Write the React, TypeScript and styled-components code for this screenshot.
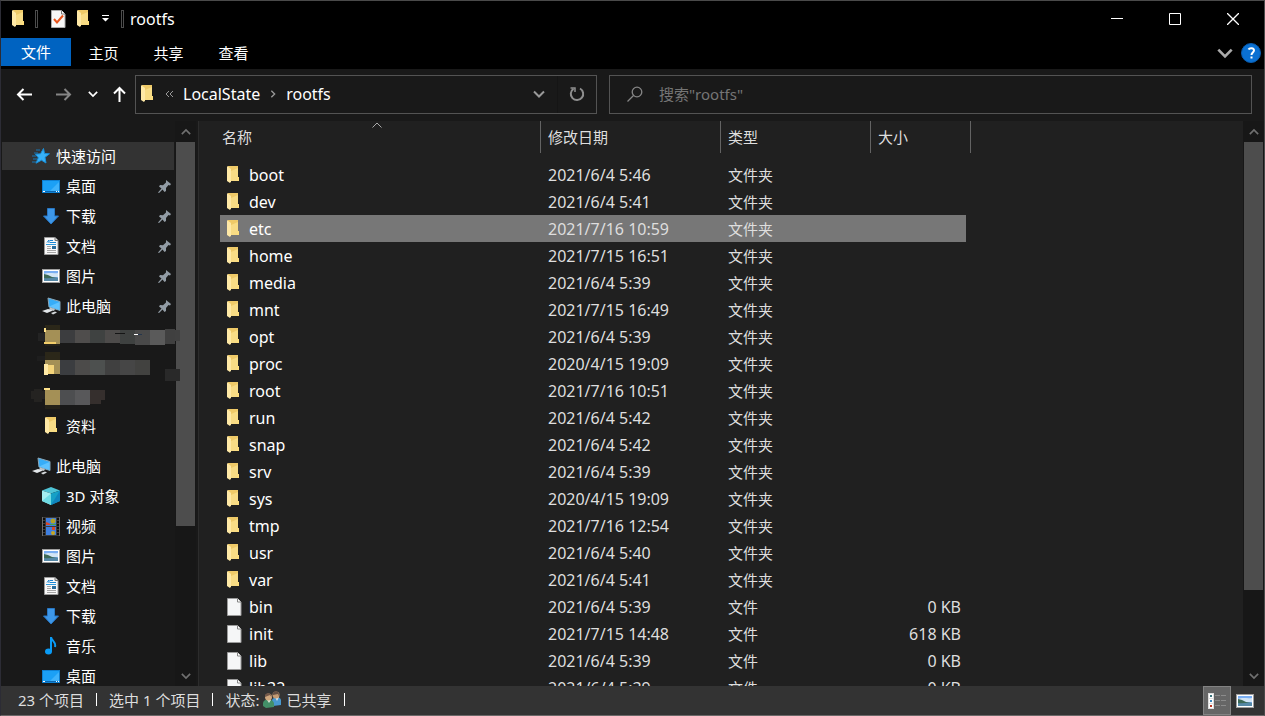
import React from "react";
import styled, { createGlobalStyle, css } from "styled-components";

const GlobalStyle = createGlobalStyle`
  *, *::before, *::after { box-sizing: border-box; }
  html, body { margin: 0; padding: 0; background: #000; }
  body, button, input, table {
    font-family: "Noto Sans", "Noto Sans CJK SC", sans-serif;
    font-size: 15px;
    line-height: 20px;
    color: #fff;
  }
  button { margin: 0; padding: 0; border: 0; background: none; cursor: default; }
  svg { display: block; flex: none; }
`;

const Window = styled.div`
  height: 100vh;
  min-height: 400px;
  display: flex;
  flex-direction: column;
  overflow: hidden;
  background: #191919;
  border: 1px solid #4a4a4a;
  border-left-color: #2c2c35;
  border-bottom-color: #6b6868;
`;

/* ---------- title bar ---------- */
const TitleBar = styled.header`
  flex: none;
  height: 37px;
  display: flex;
  align-items: center;
  padding: 0 0 2px 11px;
  background: #000;
`;

const QuickButton = styled.button<{ $gap: number }>`
  display: flex;
  margin-left: ${(p) => p.$gap}px;
`;

const Tick = styled.span<{ $gap: number }>`
  width: 3px;
  height: 18px;
  margin-left: ${(p) => p.$gap}px;
  border: 1px solid #4d4d4d;
`;

const Title = styled.h1`
  flex: 1;
  margin: 0 0 0 6px;
  font-size: 16px;
  font-weight: 400;
  line-height: 20px;
`;

const CaptionButtons = styled.div`
  display: flex;
  align-self: stretch;
  padding-right: 2px;
`;

const CaptionButton = styled.button`
  width: 58px;
  display: flex;
  align-items: center;
  justify-content: center;
`;

/* ---------- ribbon ---------- */
const Ribbon = styled.nav`
  flex: none;
  height: 31px;
  display: flex;
  align-items: flex-start;
  background: #000;
`;

const RibbonTab = styled.button<{ $primary?: boolean }>`
  width: ${(p) => (p.$primary ? 70 : 65)}px;
  height: ${(p) => (p.$primary ? 28 : 30)}px;
  background: ${(p) => (p.$primary ? "#0063c1" : "transparent")};
`;

const RibbonEnd = styled.div`
  margin-left: auto;
  height: 30px;
  display: flex;
  align-items: center;
  gap: 8px;
  padding-right: 3px;
`;

const IconButton = styled.button`
  display: flex;
`;

/* ---------- address row ---------- */
const AddressRow = styled.div`
  flex: none;
  height: 52px;
  display: flex;
  align-items: center;
  padding: 0 12px 2px 15px;
`;

const NavButtons = styled.div`
  flex: none;
  width: 119px;
  display: grid;
  grid-template-columns: 39px 33px 23px 17px;
  align-items: center;
`;

const AddressBox = styled.div`
  flex: 455 1 0;
  height: 39px;
  min-width: 0;
  display: flex;
  align-items: center;
  padding-left: 5px;
  border: 1px solid #535353;
`;

const Crumb = styled.button`
  font-size: 16px;
  margin-left: 9px;
`;

const CrumbMark = styled.span`
  display: flex;
  margin-left: 9px;
`;

const HistoryButton = styled.button`
  display: flex;
  justify-content: center;
  width: 36px;
  margin-left: auto;
`;

const RefreshButton = styled.button`
  display: flex;
  align-items: center;
  justify-content: center;
  width: 39px;
  align-self: stretch;
  border-left: 1px solid #151515;
`;

const SearchBox = styled.label`
  flex: 624 1 0;
  height: 39px;
  min-width: 0;
  display: flex;
  align-items: center;
  gap: 16px;
  margin-left: 12px;
  padding-left: 17px;
  border: 1px solid #535353;
`;

const SearchInput = styled.input`
  flex: 1;
  min-width: 0;
  padding: 0;
  border: 0;
  outline: 0;
  background: none;
  &::placeholder { color: #757575; opacity: 1; }
`;

/* ---------- main area ---------- */
const Main = styled.div`
  flex: 1;
  min-height: 0;
  display: flex;
`;

const NavPane = styled.aside`
  flex: none;
  width: 198px;
  display: flex;
  overflow: hidden;
  padding-right: 3px;
  border-right: 1px solid #2c2c2c;
`;

const Tree = styled.nav`
  width: 174px;
  flex: none;
  display: flex;
  flex-direction: column;
  gap: 12px;
  padding: 21px 1px 0;
`;

const TreeGroup = styled.div`
  display: flex;
  flex-direction: column;
  gap: 2px;
`;

const TreeItem = styled.a<{ $root?: boolean; $active?: boolean }>`
  flex: none;
  height: 28px;
  display: flex;
  align-items: center;
  gap: 5px;
  padding: 0 2px 0 ${(p) => (p.$root ? 29 : 39)}px;
  color: #fff;
  text-decoration: none;
  background: ${(p) => (p.$active ? "#333" : "transparent")};
`;

const TreeLabel = styled.span`
  flex: 1;
  white-space: nowrap;
`;

const IconSlot = styled.span`
  width: 20px;
  display: flex;
  justify-content: center;
`;

const Masked = styled.div`
  position: relative;
  flex: none;
  height: 88px;
`;

const MaskArt = styled.svg`
  position: absolute;
  z-index: 1;
  left: 28px;
  top: 0;
`;

const ScrollTrack = styled.div`
  flex: none;
  width: 21px;
  display: flex;
  flex-direction: column;
  padding: 0 1px;
  background: #171717;
`;

const ScrollArrow = styled.button`
  flex: none;
  height: 21px;
  display: flex;
  align-items: center;
  justify-content: center;
`;

const ScrollThumb = styled.div<{ $share: number }>`
  flex: ${(p) => p.$share} 1 0;
  background: #4d4d4d;
`;

const ScrollRest = styled.div<{ $share: number }>`
  flex: ${(p) => p.$share} 1 0;
`;

const FilePane = styled.section`
  flex: 1;
  min-width: 0;
  overflow: hidden;
  padding-left: 21px;
  background: #202020;
`;

/* ---------- file table ---------- */
const FileTable = styled.table`
  table-layout: fixed;
  width: 751px;
  border-collapse: separate;
  border-spacing: 0;
`;

const HeadCell = styled.th`
  height: 40px;
  padding: 0;
  vertical-align: top;
  font-weight: 400;
  text-align: left;
  color: #dedede;
`;

const HeadInner = styled.div<{ $pad: number }>`
  position: relative;
  height: 32px;
  padding: 6px 0 6px ${(p) => p.$pad}px;
  border-right: 1px solid #636363;
`;

const SortMark = styled.svg`
  position: absolute;
  left: 152px;
  top: 1px;
`;

const cellBase = css<{ $selected?: boolean }>`
  height: 27px;
  padding: 0 0 0 7px;
  text-align: left;
  font-weight: 400;
  color: #dedede;
  background: ${(p) => (p.$selected ? "#777" : "transparent")};
`;

const Cell = styled.td<{ $selected?: boolean }>`
  ${cellBase}
`;

const DateCell = styled.td<{ $selected?: boolean }>`
  ${cellBase}
  font-size: 16px;
`;

const SizeCell = styled.td<{ $selected?: boolean }>`
  ${cellBase}
  font-size: 16px;
  text-align: right;
  padding-right: 5px;
  border-right: 5px solid transparent;
  background-clip: padding-box;
`;

const NameCell = styled.th<{ $selected?: boolean }>`
  ${cellBase}
  font-size: 16px;
  color: #fff;
`;

const NameInner = styled.div`
  display: grid;
  grid-template-columns: 15px 1fr;
  column-gap: 7px;
  align-items: center;
`;

/* ---------- status bar ---------- */
const StatusBar = styled.footer`
  flex: none;
  height: 29px;
  display: flex;
  padding-left: 17px;
  background: #333;
  color: #dedede;
`;

const StatusInfo = styled.div`
  display: flex;
  align-items: center;
  gap: 12px;
  padding-bottom: 2px;
`;

const StatusRule = styled.span`
  width: 1px;
  height: 13px;
  background: #fff;
`;

const ShareState = styled.span`
  display: flex;
  align-items: center;
  gap: 4px;
`;

const ViewButtons = styled.div`
  margin-left: auto;
  display: flex;
  padding-right: 5px;
`;

const ViewButton = styled.button<{ $on?: boolean }>`
  width: 28px;
  display: flex;
  align-items: center;
  justify-content: center;
  border: 1px solid ${(p) => (p.$on ? "#838383" : "transparent")};
  background: ${(p) => (p.$on ? "#666" : "transparent")};
`;

/* ---------- icons ---------- */
const FolderIcon = () => (
  <svg width="13" height="18" viewBox="0 0 13 18">
    <path d="M1 0h10v11h1v4H4L1 14z" fill="#efca68" />
    <path d="M4 5l7-3v9h1v4H4z" fill="#f8dc85" />
    <path d="M0 0l4 3v12.500L3 17 0 15z" fill="#ffe9a6" />
    <path d="M11 11h1v4h-2z" fill="#ffdf7c" />
  </svg>
);

const FileIcon = () => (
  <svg width="15" height="18" viewBox="0 0 15 18">
    <path d="M.5.500h10l3.500 3.500v13.500H.5z" fill="#f5f6f7" stroke="#9b9b9b" />
    <path d="M10.500.500v3.500H14" fill="#fff" stroke="#858585" />
  </svg>
);

const CheckDocIcon = () => (
  <svg width="15" height="18" viewBox="0 0 15 18">
    <path d="M.5.500h10l3.500 3.500v13.500H.5z" fill="#f7f7f7" stroke="#aaa" />
    <path d="M10.500.500v3.500H14" fill="#fff" stroke="#777" />
    <path d="M3 9l3 3.500L12 5.500" fill="none" stroke="#e8541c" strokeWidth="2" />
  </svg>
);

const StarIcon = () => (
  <svg width="18" height="16" viewBox="0 0 18 16">
    <path d="M11.500.500l1 5 5 .300-4.500 3.500 1 5.700-4.500-2.800-5.500 3 2.300-5.400L3.500 6.200l5-.4z" fill="#37b1f7" stroke="#198fda" />
    <path d="M4 2h4M2 5h4M0 8h4M1 11h4M0 14h4" stroke="#1877b5" />
  </svg>
);

const DesktopIcon = () => (
  <svg width="18" height="13" viewBox="0 0 18 13">
    <rect x=".5" y=".5" width="17" height="12" fill="#1ba0f6" stroke="#0e80d3" />
    <path d="M8 11L17 2v9z" fill="#3fb2fb" />
    <path d="M1 11.500h16" stroke="#0a65ad" />
    <path d="M1 11.500h2M14 11.500h1M16 11.500h1" stroke="#fff" />
  </svg>
);

const DownloadIcon = () => (
  <svg width="18" height="17" viewBox="0 0 18 17">
    <path d="M5.500.500h7v7.500h4L9 16 1.500 8h4z" fill="#3d97e8" stroke="#2877c4" />
  </svg>
);

const DocumentIcon = () => (
  <svg width="15" height="18" viewBox="0 0 15 18">
    <path d="M.5.500h10.500l3 3v14H.5z" fill="#f8f8f8" stroke="#9a9a9a" />
    <path d="M11 .500v3h3" fill="#ddd" stroke="#777" />
    <path d="M3 5.500l2-2.500v3M6 3.500h3M6 5.500h6" fill="none" stroke="#1b84d0" />
    <path d="M3 9.500h4M3 11.500h4M3 13.500h9M3 15.500h9" stroke="#a5a5a5" />
    <path d="M2 7.500h10" stroke="#2d9adf" />
    <rect x="8" y="9" width="4" height="3" fill="#286b9b" />
  </svg>
);

const PictureIcon = () => (
  <svg width="18" height="14" viewBox="0 0 18 14">
    <rect x=".5" y=".5" width="17" height="13" fill="#fff" stroke="#9e9e9e" />
    <rect x="2" y="2" width="14" height="10" fill="#79aef3" />
    <path d="M2 5c5-2 9 0 14-1v4H2z" fill="#d2e5f6" />
    <path d="M2 5l4 1 4 2 6 1v1H2z" fill="#3d6a58" />
    <path d="M2 9c5 1 9-1 14 0v3H2z" fill="#5588a6" />
  </svg>
);

const ComputerIcon = () => (
  <svg width="19" height="18" viewBox="0 0 19 18">
    <path d="M6 1l12 3.500v9L7 10z" fill="#36adf8" stroke="#8aa7b8" />
    <path d="M7 9.500L17.500 5v8z" fill="#5ec2ff" />
    <path d="M8 10.500l5 1.500-1 2-5-1.500z" fill="#bfc5c9" />
    <path d="M0 14l6-2 5 1.500L5 16z" fill="#e3e7ea" />
    <path d="M9 16l4-1.500 2 1L11 17.500z" fill="#d5d9dc" />
  </svg>
);

const CubeIcon = () => (
  <svg width="18" height="18" viewBox="0 0 18 18">
    <path d="M0 3.500L9 0l9 3.500L9 6.500z" fill="#4fc4d6" />
    <path d="M0 3.500l9 3V18l-9-4z" fill="#a4eef0" />
    <path d="M0 14l9-7.500V18z" fill="#6fdbe4" />
    <path d="M18 3.500l-9 3V18l9-4z" fill="#16a0c6" />
    <path d="M18 3.500L9 18l9-4z" fill="#0f84bd" />
  </svg>
);

const VideoIcon = () => (
  <svg width="18" height="19" viewBox="0 0 18 19">
    <rect width="18" height="19" fill="#3c3c3c" />
    <rect x="4" y="1" width="10" height="8" fill="#3f7fe0" />
    <rect x="4" y="10" width="10" height="8" fill="#3f7fe0" />
    <path d="M2 1v18M16 1v18" stroke="#0d0d0d" strokeWidth="2" strokeDasharray="2 1" />
    <path d="M.5 0v19M17.500 0v19" stroke="#6a6a6a" />
    <circle cx="11" cy="4" r="2.500" fill="#b4a226" />
    <circle cx="11" cy="16" r="2" fill="#c8a822" />
    <path d="M4 5l3 1 2 2H4zM10 10h3v3h-3z" fill="#d8482b" />
    <path d="M8 7h6v1H8z" fill="#45a546" />
  </svg>
);

const MusicIcon = () => (
  <svg width="12" height="18" viewBox="0 0 12 18">
    <ellipse cx="3.500" cy="14.500" rx="3.500" ry="3" fill="#0a9bf5" />
    <path d="M6 14.500V0c.5 4 5.500 5 4 10" fill="none" stroke="#0a9bf5" strokeWidth="2" />
  </svg>
);

const PinIcon = () => (
  <svg width="14" height="13" viewBox="0 0 14 13">
    <path d="M8 0l5 4-1 1.500-1.500-.500-2.500 3L8 11 6.500 12 4.500 9.500 1 13l-1-.500L3.500 8.500 1 6.500 2 5l3 .200L8 2.500z" fill="#929ca5" />
  </svg>
);

const PeopleIcon = () => (
  <svg width="19" height="17" viewBox="0 0 19 17">
    <path d="M9 9c1-3 8-4 9 0v5l-8 1z" fill="#4898cf" />
    <path d="M12 6l2 4 2-4z" fill="#dfe8ec" />
    <circle cx="13" cy="4" r="3.500" fill="#c39a72" />
    <path d="M10 4c-1-5 7-5 6 1l-1-2z" fill="#655044" />
    <path d="M0 12c1-5 9-5 11 0v4l-8 1-3-2z" fill="#438f68" />
    <path d="M4 9l2 3 2-3z" fill="#d8e2d6" />
    <circle cx="5.500" cy="6" r="3.500" fill="#cfa77e" />
    <path d="M2 6C1 1 9 1 8.500 6L7 4z" fill="#745849" />
  </svg>
);

const DetailsIcon = () => (
  <svg width="18" height="16" viewBox="0 0 18 16">
    <path d="M0 0h6v16H0z" fill="#ddd" />
    <path d="M1 1h4v4H1zM1 6h4v4H1zM1 11h4v4H1z" fill="#fff" />
    <path d="M2 2h2v2H2z" fill="#39737d" />
    <path d="M2 7h2v2H2z" fill="#3c86bb" />
    <path d="M2 12h2v2H2z" fill="#b93523" />
    <path d="M7 2.500h5M13 2.500h5M7 7.500h5M13 7.500h5M7 12.500h5M13 12.500h5" stroke="#8b8b8b" />
  </svg>
);

type ChevronProps = { size: number; color: string; weight?: number; dir?: "up" | "down" | "right" };
const Chevron = ({ size, color, weight = 2, dir = "down" }: ChevronProps) => {
  const turn = { down: 0, up: 180, right: -90 }[dir];
  return (
    <svg width={size} height={size} viewBox="0 0 12 12">
      <path d="M1 3.500l5 5 5-5" fill="none" stroke={color} strokeWidth={weight} transform={`rotate(${turn} 6 6)`} />
    </svg>
  );
};

const Arrow = ({ color, turn = 0 }: { color: string; turn?: number }) => (
  <svg width="17" height="17" viewBox="0 0 17 17">
    <path d="M16 8.500H2M7.500 3L2 8.500l5.500 5.500" fill="none" stroke={color} strokeWidth="2" transform={`rotate(${turn} 8.500 8.500)`} />
  </svg>
);

/* ---------- data ---------- */
const quickAccess = [
  { label: "桌面", icon: <DesktopIcon /> },
  { label: "下载", icon: <DownloadIcon /> },
  { label: "文档", icon: <DocumentIcon /> },
  { label: "图片", icon: <PictureIcon /> },
  { label: "此电脑", icon: <ComputerIcon /> },
];

const thisPc = [
  { label: "3D 对象", icon: <CubeIcon /> },
  { label: "视频", icon: <VideoIcon /> },
  { label: "图片", icon: <PictureIcon /> },
  { label: "文档", icon: <DocumentIcon /> },
  { label: "下载", icon: <DownloadIcon /> },
  { label: "音乐", icon: <MusicIcon /> },
  { label: "桌面", icon: <DesktopIcon /> },
];

type Entry = { name: string; date: string; size?: string };
const entries: Entry[] = [
  { name: "boot", date: "2021/6/4 5:46" },
  { name: "dev", date: "2021/6/4 5:41" },
  { name: "etc", date: "2021/7/16 10:59" },
  { name: "home", date: "2021/7/15 16:51" },
  { name: "media", date: "2021/6/4 5:39" },
  { name: "mnt", date: "2021/7/15 16:49" },
  { name: "opt", date: "2021/6/4 5:39" },
  { name: "proc", date: "2020/4/15 19:09" },
  { name: "root", date: "2021/7/16 10:51" },
  { name: "run", date: "2021/6/4 5:42" },
  { name: "snap", date: "2021/6/4 5:42" },
  { name: "srv", date: "2021/6/4 5:39" },
  { name: "sys", date: "2020/4/15 19:09" },
  { name: "tmp", date: "2021/7/16 12:54" },
  { name: "usr", date: "2021/6/4 5:40" },
  { name: "var", date: "2021/6/4 5:41" },
  { name: "bin", date: "2021/6/4 5:39", size: "0 KB" },
  { name: "init", date: "2021/7/15 14:48", size: "618 KB" },
  { name: "lib", date: "2021/6/4 5:39", size: "0 KB" },
  { name: "lib32", date: "2021/6/4 5:39", size: "0 KB" },
];

/* Mosaic tiles over three folder names: x, y, width, height, colour. */
const mosaic: [number, number, number, number, string][] = [
  [15, 3, 15, 6, "#2b2719"], [8, 11, 7, 8, "#232323"], [15, 21, 15, 3, "#24221a"],
  [15, 8, 15, 14, "#a49056"], [30, 8, 15, 13, "#3c3d3f"], [45, 8, 15, 13, "#4f4d4c"],
  [60, 8, 15, 13, "#3f4241"], [75, 8, 15, 13, "#4d4b4a"], [90, 8, 15, 14, "#3e4140"],
  [105, 8, 15, 15, "#494949"], [120, 8, 15, 15, "#5a5a5a"], [135, 7, 10, 15, "#404040"],
  [145, 8, 5, 11, "#414141"], [14, 6, 2, 4, "#ffe28a"], [14, 20, 12, 2, "#f2cd6a"],
  [85, 11, 10, 1, "#151515"], [104, 12, 4, 1, "#ffffff"], [108, 12, 4, 1, "#25364c"],
  [15, 30, 15, 8, "#2b2719"], [7, 34, 8, 5, "#1e1e1e"], [15, 38, 15, 14, "#a49056"],
  [14, 42, 4, 11, "#ffe9a6"], [18, 43, 6, 9, "#f4d47a"], [30, 38, 15, 15, "#3b3d40"],
  [45, 38, 15, 15, "#4c4b4a"], [60, 38, 15, 15, "#4d504f"], [75, 38, 15, 15, "#404040"],
  [90, 38, 15, 15, "#464646"], [105, 38, 15, 15, "#424240"], [135, 47, 15, 12, "#292929"],
  [1, 69, 14, 8, "#242321"], [4, 67, 8, 13, "#242321"], [15, 68, 15, 15, "#a49056"],
  [14, 66, 6, 2, "#ffe28a"], [15, 83, 15, 4, "#242219"], [30, 68, 15, 15, "#4d4e50"],
  [45, 68, 15, 15, "#58585a"], [60, 68, 15, 10, "#352f2d"], [60, 78, 11, 4, "#352f2d"],
];

const Scrollbar = ({ thumb, rest }: { thumb: number; rest: number }) => (
  <ScrollTrack>
    <ScrollArrow aria-label="向上滚动"><Chevron size={10} color="#707070" dir="up" /></ScrollArrow>
    <ScrollThumb $share={thumb} />
    <ScrollRest $share={rest} />
    <ScrollArrow aria-label="向下滚动"><Chevron size={10} color="#707070" /></ScrollArrow>
  </ScrollTrack>
);

export default function App() {
  const [selected, setSelected] = React.useState("etc");
  return (
    <>
      <GlobalStyle />
      <Window>
        <TitleBar>
          <FolderIcon />
          <Tick $gap={10} />
          <QuickButton $gap={13} aria-label="属性"><CheckDocIcon /></QuickButton>
          <QuickButton $gap={11} aria-label="新建文件夹"><FolderIcon /></QuickButton>
          <QuickButton $gap={12} aria-label="自定义快速访问工具栏">
            <svg width="7" height="7" viewBox="0 0 7 7">
              <path d="M0 0h7v1H0zM0 3h7L3.500 6.500z" fill="#fff" />
            </svg>
          </QuickButton>
          <Tick $gap={12} />
          <Title>rootfs</Title>
          <CaptionButtons>
            <CaptionButton aria-label="最小化">
              <svg width="12" height="12" viewBox="0 0 12 12"><path d="M0 5.500h12" stroke="#fff" /></svg>
            </CaptionButton>
            <CaptionButton aria-label="最大化">
              <svg width="12" height="12" viewBox="0 0 12 12"><path d="M.5.500h11v11H.5z" fill="none" stroke="#fff" /></svg>
            </CaptionButton>
            <CaptionButton aria-label="关闭">
              <svg width="12" height="12" viewBox="0 0 12 12"><path d="M0 0l12 12M12 0L0 12" stroke="#fff" strokeWidth="1.300" /></svg>
            </CaptionButton>
          </CaptionButtons>
        </TitleBar>

        <Ribbon>
          <RibbonTab $primary>文件</RibbonTab>
          <RibbonTab>主页</RibbonTab>
          <RibbonTab>共享</RibbonTab>
          <RibbonTab>查看</RibbonTab>
          <RibbonEnd>
            <IconButton aria-label="展开功能区"><Chevron size={16} color="#aaa" /></IconButton>
            <IconButton aria-label="帮助">
              <svg width="20" height="20" viewBox="0 0 20 20">
                <circle cx="10" cy="10" r="9.500" fill="#0a70d2" stroke="#0a5cae" />
                <path d="M7.500 6.500c1-2 5.500-1.800 5.500.8 0 2.200-2.500 2.300-2.500 4.700M10.500 13.500v2" fill="none" stroke="#fff" strokeWidth="2" />
              </svg>
            </IconButton>
          </RibbonEnd>
        </Ribbon>

        <AddressRow>
          <NavButtons>
            <IconButton aria-label="后退"><Arrow color="#fff" /></IconButton>
            <IconButton aria-label="前进"><Arrow color="#858585" turn={180} /></IconButton>
            <IconButton aria-label="最近浏览的位置"><Chevron size={10} color="#fff" /></IconButton>
            <IconButton aria-label="上移"><Arrow color="#fff" turn={90} /></IconButton>
          </NavButtons>
          <AddressBox>
            <FolderIcon />
            <CrumbMark>
              <svg width="11" height="8" viewBox="-2 0 11 8">
                <path d="M4 1L1 4l3 3M8 1L5 4l3 3" fill="none" stroke="#999" />
              </svg>
            </CrumbMark>
            <Crumb>LocalState</Crumb>
            <CrumbMark><Chevron size={8} color="#999" dir="right" /></CrumbMark>
            <Crumb>rootfs</Crumb>
            <HistoryButton aria-label="以前的位置"><Chevron size={12} color="#999" /></HistoryButton>
            <RefreshButton aria-label="刷新">
              <svg width="16" height="16" viewBox="0 0 16 16">
                <path d="M11 2.500A6.200 6.200 0 1 1 4.500 2.800" fill="none" stroke="#8e8e8e" strokeWidth="2" />
                <path d="M1.500 2H6v4" fill="none" stroke="#8e8e8e" strokeWidth="1.500" />
              </svg>
            </RefreshButton>
          </AddressBox>
          <SearchBox>
            <svg width="16" height="16" viewBox="0 0 16 16">
              <circle cx="10" cy="6" r="4.800" fill="none" stroke="#868686" strokeWidth="1.300" />
              <path d="M6.500 9.500L.5 15.500" stroke="#868686" strokeWidth="1.300" />
            </svg>
            <SearchInput type="text" aria-label="搜索" placeholder={'搜索"rootfs"'} />
          </SearchBox>
        </AddressRow>

        <Main>
          <NavPane>
            <Tree>
              <TreeGroup>
                <TreeItem href="#" $root $active><IconSlot><StarIcon /></IconSlot><TreeLabel>快速访问</TreeLabel></TreeItem>
                {quickAccess.map((q) => (
                  <TreeItem href="#" key={q.label}>
                    <IconSlot>{q.icon}</IconSlot>
                    <TreeLabel>{q.label}</TreeLabel>
                    <PinIcon />
                  </TreeItem>
                ))}
                <Masked>
                  <MaskArt width="150" height="88" viewBox="0 0 150 88" aria-hidden="true">
                    {mosaic.map(([x, y, w, h, fill], i) => (
                      <rect key={i} x={x} y={y} width={w} height={h} fill={fill} />
                    ))}
                  </MaskArt>
                </Masked>
                <TreeItem href="#"><IconSlot><FolderIcon /></IconSlot><TreeLabel>资料</TreeLabel></TreeItem>
              </TreeGroup>
              <TreeGroup>
                <TreeItem href="#" $root><IconSlot><ComputerIcon /></IconSlot><TreeLabel>此电脑</TreeLabel></TreeItem>
                {thisPc.map((q) => (
                  <TreeItem href="#" key={q.label}>
                    <IconSlot>{q.icon}</IconSlot>
                    <TreeLabel>{q.label}</TreeLabel>
                  </TreeItem>
                ))}
              </TreeGroup>
            </Tree>
            <Scrollbar thumb={384} rest={139} />
          </NavPane>

          <FilePane>
            <FileTable>
              <colgroup>
                <col width="321" />
                <col width="180" />
                <col width="150" />
                <col width="100" />
              </colgroup>
              <thead>
                <tr>
                  <HeadCell scope="col">
                    <HeadInner $pad={2}>
                      名称
                      <SortMark width="10" height="6" viewBox="0 0 10 6">
                        <path d="M.5 5.500L5 1l4.500 4.500" fill="none" stroke="#aaa" />
                      </SortMark>
                    </HeadInner>
                  </HeadCell>
                  <HeadCell scope="col"><HeadInner $pad={7}>修改日期</HeadInner></HeadCell>
                  <HeadCell scope="col"><HeadInner $pad={7}>类型</HeadInner></HeadCell>
                  <HeadCell scope="col"><HeadInner $pad={7}>大小</HeadInner></HeadCell>
                </tr>
              </thead>
              <tbody>
                {entries.map((e) => {
                  const on = e.name === selected;
                  return (
                    <tr key={e.name} onClick={() => setSelected(e.name)}>
                      <NameCell scope="row" $selected={on}>
                        <NameInner>{e.size ? <FileIcon /> : <FolderIcon />}{e.name}</NameInner>
                      </NameCell>
                      <DateCell $selected={on}>{e.date}</DateCell>
                      <Cell $selected={on}>{e.size ? "文件" : "文件夹"}</Cell>
                      <SizeCell $selected={on}>{e.size}</SizeCell>
                    </tr>
                  );
                })}
              </tbody>
            </FileTable>
          </FilePane>
          <Scrollbar thumb={448} rest={75} />
        </Main>

        <StatusBar>
          <StatusInfo>
            <span>23 个项目</span>
            <StatusRule />
            <span>选中 1 个项目</span>
            <StatusRule />
            <ShareState>状态:<PeopleIcon />已共享</ShareState>
            <StatusRule />
          </StatusInfo>
          <ViewButtons>
            <ViewButton $on aria-label="详细信息"><DetailsIcon /></ViewButton>
            <ViewButton aria-label="大缩略图"><PictureIcon /></ViewButton>
          </ViewButtons>
        </StatusBar>
      </Window>
    </>
  );
}
